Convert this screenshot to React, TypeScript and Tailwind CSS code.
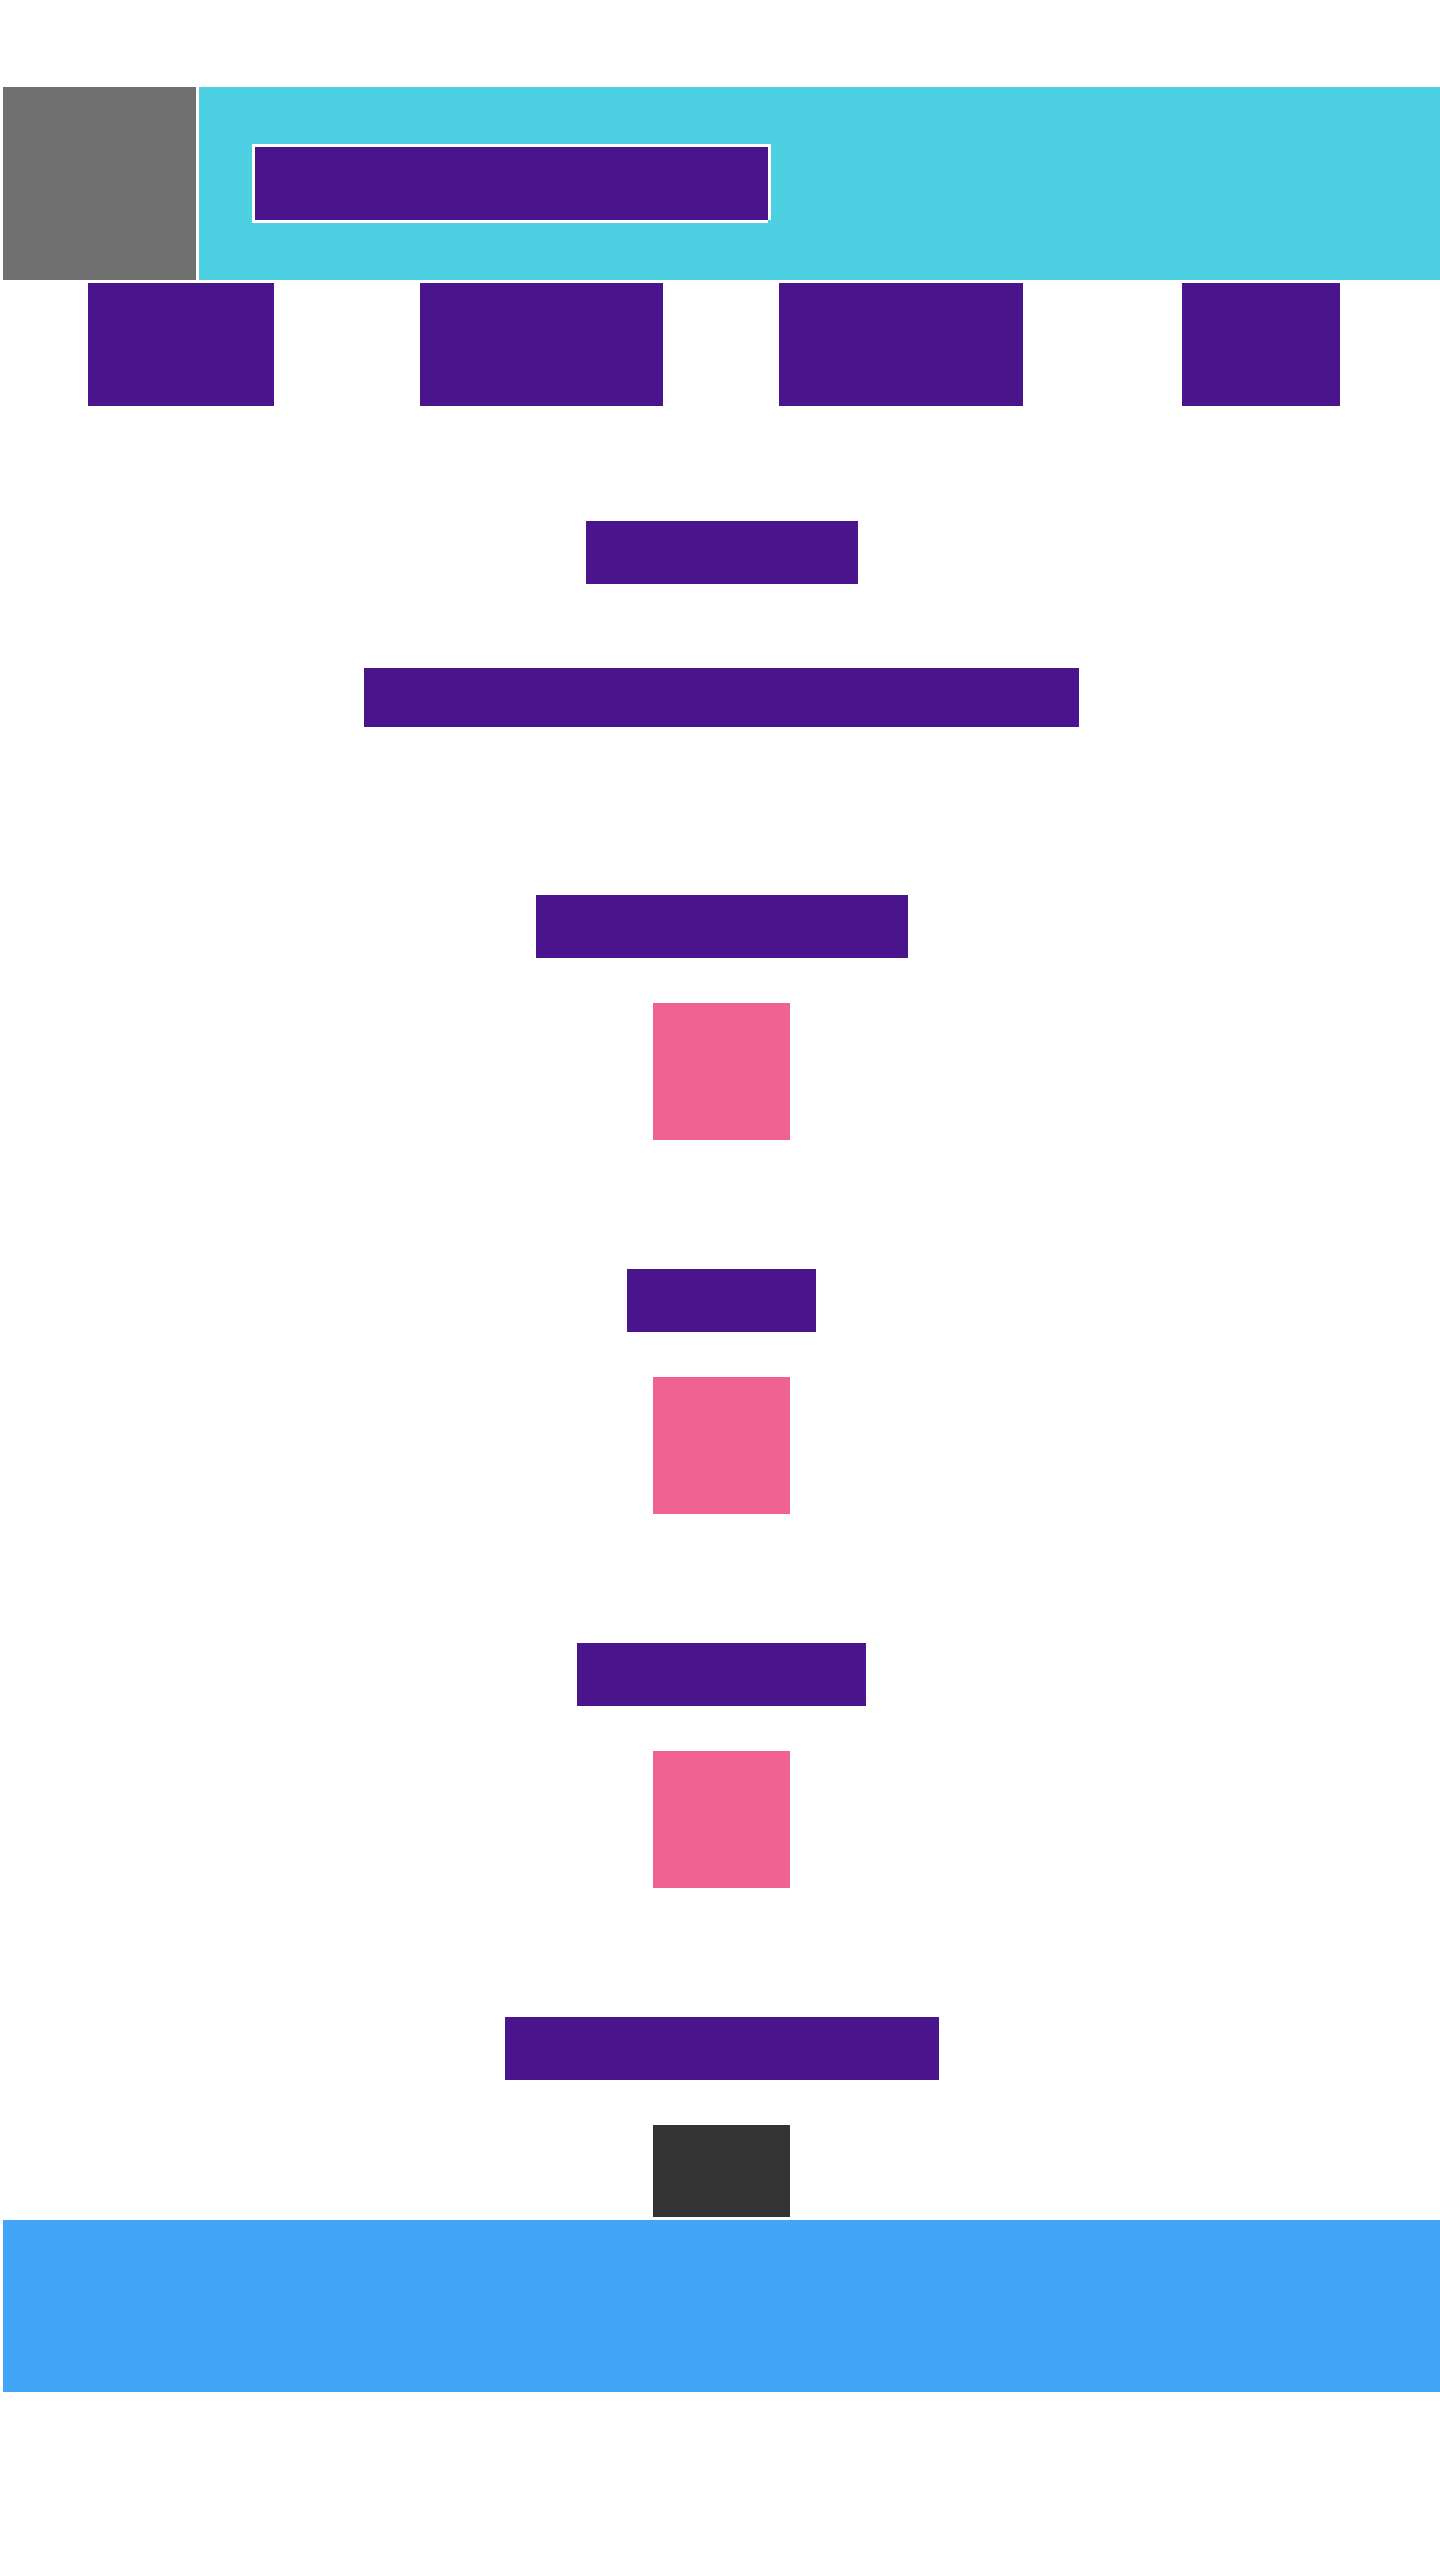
export default function App() {
  return (
    <div className="min-h-[2560px] overflow-x-hidden bg-white pl-[3px] pt-[87px] font-['Liberation_Sans',sans-serif]">
      <header className="flex h-[193px] gap-[3px]">
        <div className="w-[193px] shrink-0 bg-[#707070]" />
        <div className="flex flex-1 items-center bg-[#4dd0e1] pl-[53px]">
          <div className="flex flex-col">
            <div className="border-x-[3px] border-t-[3px] border-white">
              <div className="h-[73px] w-[513px] bg-[#4a148c]" />
            </div>
            <div className="h-[3px] w-[516px] bg-white" />
          </div>
        </div>
      </header>

      <nav className="-ml-[2px] mt-[3px] grid h-[123px] w-[1440px] grid-cols-4">
        <div className="flex justify-center">
          <div className="h-[123px] w-[186px] bg-[#4a148c]" />
        </div>
        <div className="flex justify-center">
          <div className="h-[123px] w-[243px] bg-[#4a148c]" />
        </div>
        <div className="flex justify-center">
          <div className="h-[123px] w-[244px] bg-[#4a148c]" />
        </div>
        <div className="flex justify-center">
          <div className="h-[123px] w-[158px] bg-[#4a148c]" />
        </div>
      </nav>

      <main className="flex flex-col items-center">
        <div className="mt-[115px] h-[63px] w-[272px] bg-[#4a148c]" />
        <div className="mt-[84px] h-[59px] w-[715px] bg-[#4a148c]" />

        <div className="mt-[168px] h-[63px] w-[372px] bg-[#4a148c]" />
        <div className="mt-[45px] h-[137px] w-[137px] bg-[#f06292]" />

        <div className="mt-[129px] h-[63px] w-[189px] bg-[#4a148c]" />
        <div className="mt-[45px] h-[137px] w-[137px] bg-[#f06292]" />

        <div className="mt-[129px] h-[63px] w-[289px] bg-[#4a148c]" />
        <div className="mt-[45px] h-[137px] w-[137px] bg-[#f06292]" />

        <div className="mt-[129px] h-[63px] w-[434px] bg-[#4a148c]" />
        <div className="mt-[45px] h-[92px] w-[137px] bg-[#333333]" />
      </main>

      <footer className="mt-[3px] h-[172px] bg-[#42a5f5]" />
    </div>
  );
}
